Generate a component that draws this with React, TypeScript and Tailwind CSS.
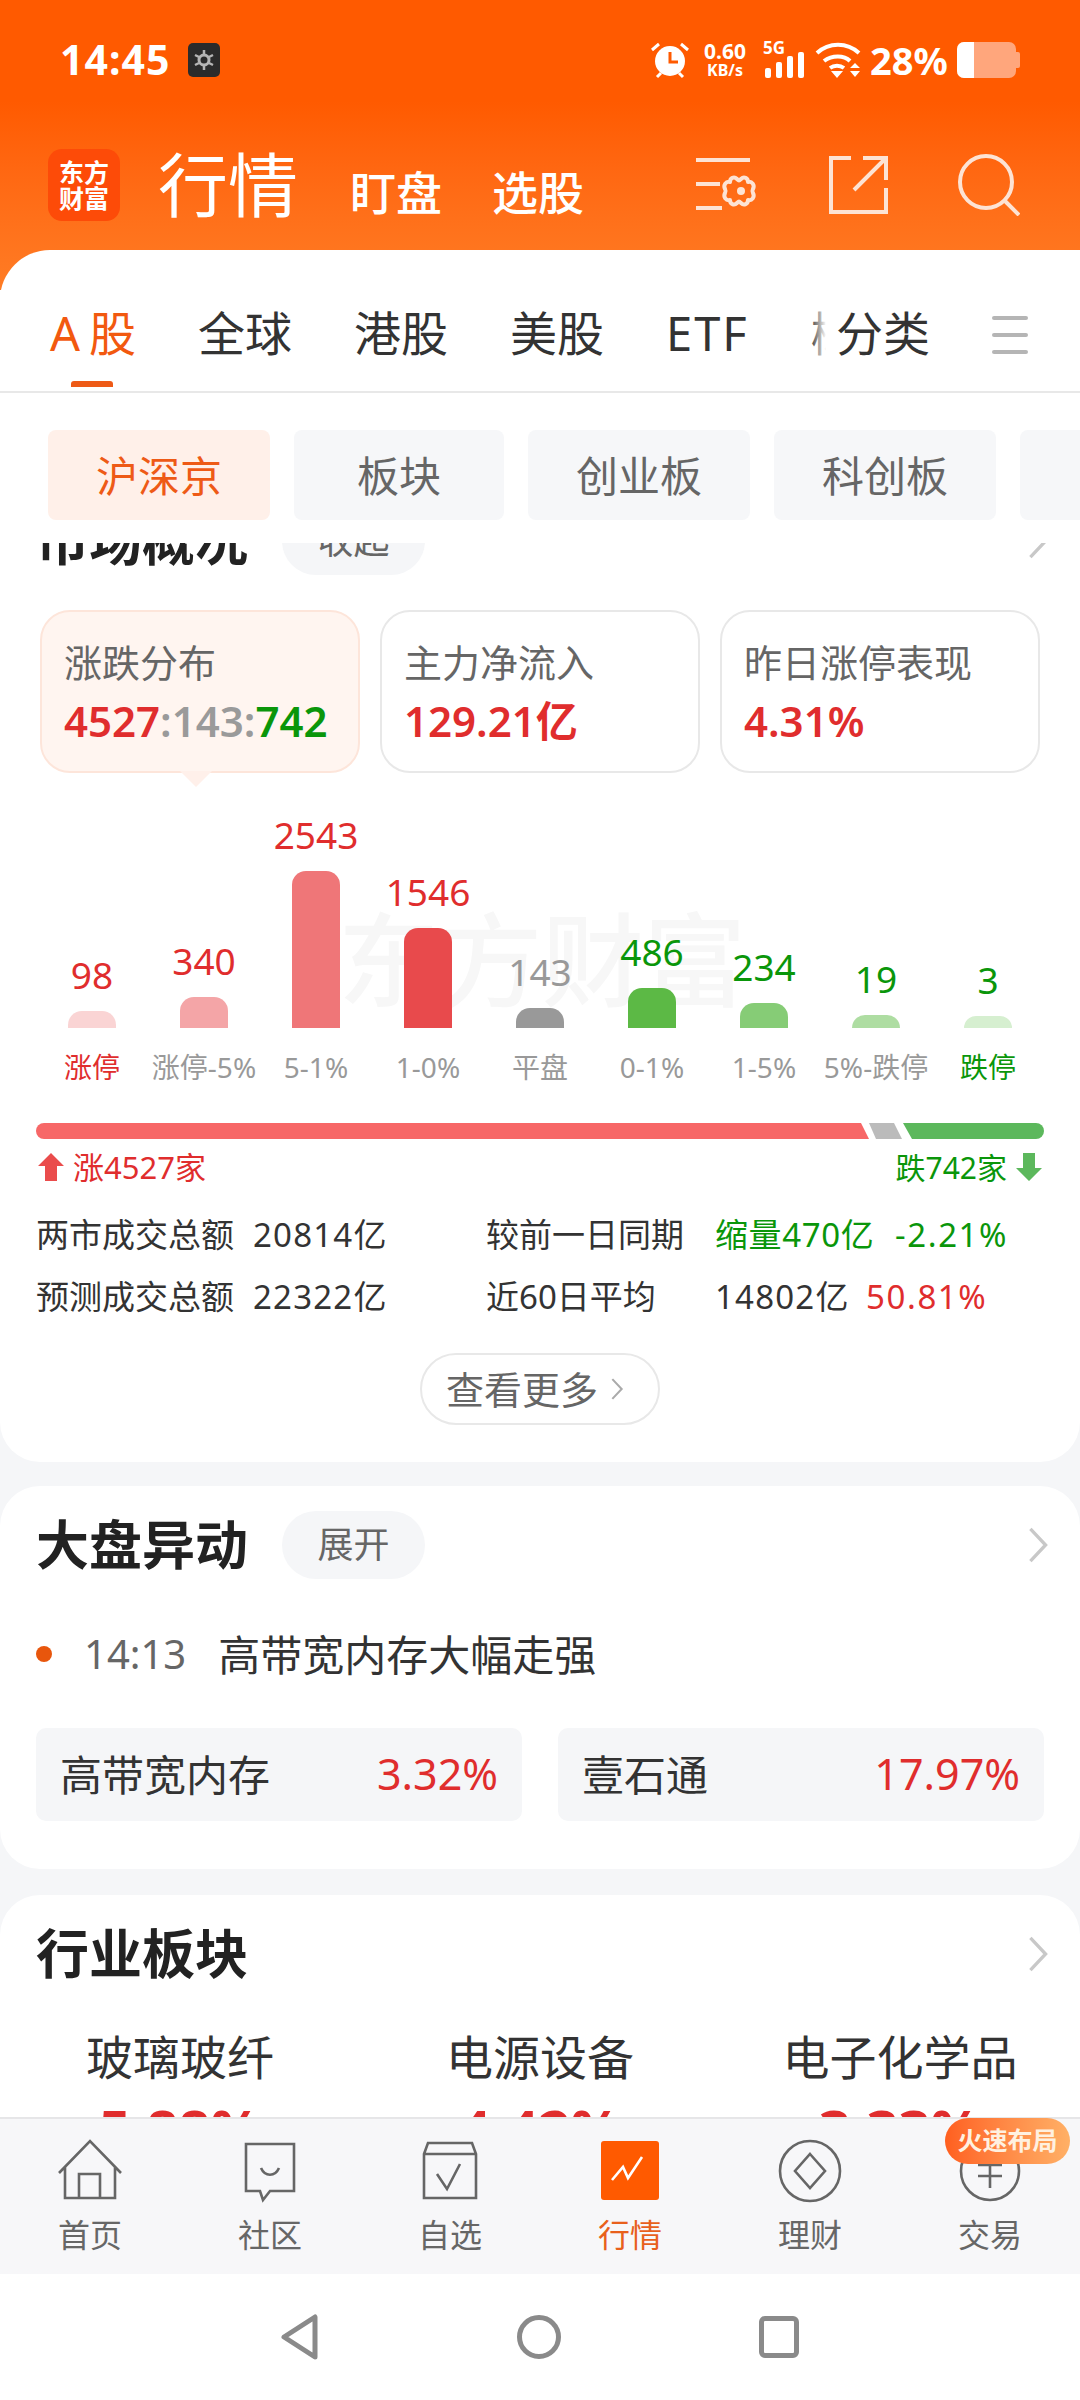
import React from 'react';

const tabs = ['全球', '港股', '美股', 'ETF', '概念'];
const chips = ['板块', '创业板', '科创板', '北证'];

const stats = [
  { title: '主力净流入', value: '129.21亿' },
  { title: '昨日涨停表现', value: '4.31%' },
];

const chart = [
  { n: '98', label: '涨停', h: 17, bar: 'bg-[#fad4d4]', num: 'text-[#e02d2d]', lab: 'text-[#e02d2d]' },
  { n: '340', label: '涨停-5%', h: 31, bar: 'bg-[#f4a5a7]', num: 'text-[#e02d2d]', lab: 'text-[#999999]' },
  { n: '2543', label: '5-1%', h: 157, bar: 'bg-[#ef7678]', num: 'text-[#e02d2d]', lab: 'text-[#999999]' },
  { n: '1546', label: '1-0%', h: 100, bar: 'bg-[#e84a4c]', num: 'text-[#e02d2d]', lab: 'text-[#999999]' },
  { n: '143', label: '平盘', h: 20, bar: 'bg-[#999999]', num: 'text-[#999999]', lab: 'text-[#999999]' },
  { n: '486', label: '0-1%', h: 40, bar: 'bg-[#5cb945]', num: 'text-[#0a960a]', lab: 'text-[#999999]' },
  { n: '234', label: '1-5%', h: 25, bar: 'bg-[#86cc76]', num: 'text-[#0a960a]', lab: 'text-[#999999]' },
  { n: '19', label: '5%-跌停', h: 13, bar: 'bg-[#aedda2]', num: 'text-[#0a960a]', lab: 'text-[#999999]' },
  { n: '3', label: '跌停', h: 12, bar: 'bg-[#d6efd0]', num: 'text-[#0a960a]', lab: 'text-[#0a960a]' },
];

const sectors = [
  { name: '玻璃玻纤', pct: '5.88%' },
  { name: '电源设备', pct: '4.42%' },
  { name: '电子化学品', pct: '3.33%' },
];

const Chevron = ({ className }: { className: string }) => (
  <svg className={className} viewBox="0 0 24 40" fill="none" stroke="currentColor" strokeWidth="3.5">
    <path d="M4 3l16 17L4 37" />
  </svg>
);

const navItems = [
  {
    label: '首页',
    icon: (
      <svg className="w-[66px] h-[66px]" viewBox="0 0 66 66" fill="none" stroke="#666" strokeWidth="2.6">
        <path d="M2 35L33 3l31 32M8 29v31h50V29M22 60V36h21v24" />
      </svg>
    ),
  },
  {
    label: '社区',
    icon: (
      <svg className="w-[66px] h-[66px]" viewBox="0 0 66 66" fill="none" stroke="#666" strokeWidth="2.6">
        <path d="M9 6h48v47H33l-7 9-3-9H9zM24 30c4 9 14 9 18 0" />
      </svg>
    ),
  },
  {
    label: '自选',
    icon: (
      <svg className="w-[66px] h-[66px]" viewBox="0 0 66 66" fill="none" stroke="#666" strokeWidth="2.6">
        <path d="M7 16l4-11h44l4 11v44H7zM7 16h52M20 36l10 15 13-25" />
      </svg>
    ),
  },
  {
    label: '行情',
    icon: (
      <svg className="w-[66px] h-[66px]" viewBox="0 0 66 66" fill="none">
        <rect x="4" y="3" width="58" height="59" rx="3" fill="#ff5a00" />
        <path d="M15 42l11-13 5 11 14-21" stroke="#fff" strokeWidth="2.6" />
      </svg>
    ),
  },
  {
    label: '理财',
    icon: (
      <svg className="w-[66px] h-[66px]" viewBox="0 0 66 66" fill="none" stroke="#666" strokeWidth="2.6">
        <circle cx="33" cy="33" r="30" />
        <path d="M33 16l15 17-15 17-15-17z" />
      </svg>
    ),
  },
  {
    label: '交易',
    icon: (
      <svg className="w-[66px] h-[66px]" viewBox="0 0 66 66" fill="none" stroke="#666" strokeWidth="2.6">
        <circle cx="33" cy="33" r="29" />
        <path d="M21 27h24M21 38h24M33 22v28" />
      </svg>
    ),
  },
];

const App: React.FC = () => {
  return (
    <div className="relative h-[2400px] w-[1080px] overflow-hidden flex flex-col bg-white font-['Noto_Sans','Noto_Sans_CJK_SC',sans-serif]">
      <div className="h-[290px] shrink-0 bg-gradient-to-b from-[#ff5a00] from-[35%] to-[#ff7c24]">
        {/* status bar */}
        <div className="h-[120px] flex items-center pl-[60px] pr-[60px] text-white">
          <span className="text-[41px] font-bold tracking-[1px]">14:45</span>
          <div className="ml-[18px] w-[32px] h-[34px] rounded-[5px] bg-[#2b2b2b] flex items-center justify-center">
            <svg className="w-[22px] h-[22px]" viewBox="0 0 22 22" fill="none" stroke="#b5b5b5">
              <circle cx="11" cy="11" r="5" strokeWidth="3" />
              <path d="M11 1v4M11 17v4M2 6l4 2M16 14l4 2M2 16l4-2M16 8l4-2" strokeWidth="2.5" />
            </svg>
          </div>
          <div className="ml-auto flex items-center">
            <svg className="w-[40px] h-[38px]" viewBox="0 0 40 38" fill="none">
              <circle cx="20" cy="20" r="15" fill="#fff" />
              <path d="M20 11v10h8" stroke="#ff5a00" strokeWidth="3" />
              <path d="M2 9l7-6M38 9l-7-6M7 36l4-4M33 36l-4-4" stroke="#fff" strokeWidth="3" />
            </svg>
            <div className="ml-[10px] w-[50px] flex flex-col items-center font-bold">
              <span className="text-[21px] leading-[21px]">0.60</span>
              <span className="text-[16px] leading-[17px]">KB/s</span>
            </div>
            <div className="relative ml-[13px] w-[44px] h-[38px]">
              <svg className="absolute left-0 top-0 w-[42px] h-[38px]" viewBox="0 0 42 38" fill="#fff">
                <rect x="2" y="27" width="6" height="10" rx="2" />
                <rect x="13" y="21" width="6" height="16" rx="2" />
                <rect x="24" y="15" width="6" height="22" rx="2" />
                <rect x="35" y="11" width="6" height="26" rx="2" />
              </svg>
              <span className="absolute left-0 -top-[3px] text-[17px] leading-[20px] font-bold">5G</span>
            </div>
            <svg className="ml-[8px] w-[46px] h-[38px]" viewBox="0 0 46 38" fill="none" stroke="#fff" strokeWidth="4">
              <path d="M2 12c12-11 30-11 42 0M9 20c8-6 20-6 26 0M15 27c4-3 10-3 14 0" />
              <path d="M16 30h12l-6 7zM35 27l5-5 5 5zM35 30h10l-5 6z" fill="#fff" stroke="none" />
            </svg>
            <span className="ml-[9px] w-[78px] text-[38px] leading-[44px] font-bold">28%</span>
            <div className="ml-[9px] flex items-center">
              <div className="w-[59px] h-[36px] rounded-[7px] overflow-hidden flex bg-[#ffa67c]">
                <div className="w-[17px] bg-white" />
              </div>
              <div className="w-[4px] h-[16px] rounded-r-[2px] bg-[#ffa67c]" />
            </div>
          </div>
        </div>

        {/* title bar */}
        <div className="h-[130px] flex items-center pl-[48px] pr-[60px] text-white">
          <div className="w-[72px] h-[72px] rounded-[14px] bg-[#fd4b08] flex flex-col items-center justify-center text-[25px] leading-[26px] font-bold">
            <span>东方</span>
            <span>财富</span>
          </div>
          <span className="ml-[38px] text-[70px] leading-[80px]">行情</span>
          <span className="ml-[52px] mt-[14px] text-[46px] font-medium">盯盘</span>
          <span className="ml-[50px] mt-[14px] text-[46px] font-medium">选股</span>
          <div className="ml-auto flex items-center gap-[70px] text-[#fde3d4]">
            <svg className="w-[64px] h-[60px]" viewBox="0 0 64 60" fill="none" stroke="currentColor" strokeWidth="4">
              <path d="M1 5h54M1 29h24M1 53h26" />
              <path d="M47 24c3-3 7-1 7 3 4-1 7 3 5 7-1 2-1 2 0 4 2 4-1 8-5 7 0 4-4 6-7 3-2-2-2-2-4 0-3 3-7 1-7-3-4 1-7-3-5-7 1-2 1-2 0-4-2-4 1-8 5-7 0-4 4-6 7-3 2 2 2 2 4 0z" strokeLinejoin="round" transform="translate(-1 0)" />
              <circle cx="46" cy="36" r="4" fill="currentColor" stroke="none" />
            </svg>
            <svg className="w-[59px] h-[58px]" viewBox="0 0 59 58" fill="none" stroke="currentColor" strokeWidth="4">
              <path d="M22 2H2v54h55V32M25 34L57 2M34 2h23v22" />
            </svg>
            <svg className="w-[62px] h-[62px]" viewBox="0 0 62 62" fill="none" stroke="currentColor" strokeWidth="4">
              <circle cx="28" cy="28" r="26" />
              <path d="M47 47l14 14" />
            </svg>
          </div>
        </div>
      </div>

      {/* main card sits over the orange header */}
      <div className="-mt-[40px] h-[293px] shrink-0 rounded-t-[50px] bg-white">
        <div className="relative h-[143px] border-b-2 border-[#e8e8e8] flex pl-[50px] pt-[53px] gap-[62px] text-[47px] leading-[60px] text-[#333333] overflow-hidden">
          <div className="relative shrink-0 w-[86px] text-[#f2590f] flex justify-between">
            <span>A</span>
            <span>股</span>
            <div className="absolute left-[21px] top-[78px] w-[42px] h-[6px] rounded-t-[3px] bg-[#ee5a16]" />
          </div>
          {tabs.map((t) => (
            <span key={t} className={`shrink-0 ${t === 'ETF' ? 'tracking-[2px]' : ''}`}>{t}</span>
          ))}
          <div className="absolute right-0 top-0 bottom-0 w-[270px] pt-[53px] flex items-start bg-gradient-to-r from-transparent to-white to-[6%]">
            <span className="ml-[26px]">分类</span>
            <div className="ml-[62px] mt-[13px] w-[36px] flex flex-col gap-[13px]">
              <div className="h-[4px] bg-[#b5b5b5] rounded" />
              <div className="h-[4px] bg-[#b5b5b5] rounded" />
              <div className="h-[4px] bg-[#b5b5b5] rounded" />
            </div>
          </div>
        </div>
        <div className="mt-[37px] flex gap-[24px] pl-[48px] overflow-hidden text-[42px] text-[#666666]">
          <div className="shrink-0 w-[222px] h-[90px] rounded-[8px] bg-[#fff0e9] text-[#ee5a16] flex items-center justify-center">沪深京</div>
          {chips.map((c, i) => (
            <div key={c} className={`shrink-0 h-[90px] rounded-[8px] bg-[#f6f7f9] flex items-center justify-center ${i === 0 ? 'w-[210px]' : 'w-[222px]'}`}>
              {c}
            </div>
          ))}
        </div>
      </div>

      {/* scrolling content, cut off by the chips on top and the nav below */}
      <div className="h-[1574px] shrink-0 overflow-hidden bg-[#f5f6f8]">
        <div className="-mt-[36px] bg-white rounded-b-[40px] px-[36px] pb-[37px]">
          <div className="h-[68px] flex items-center">
            <span className="text-[53px] font-bold text-[#222222]">市场概况</span>
            <span className="ml-[34px] w-[143px] h-[68px] rounded-full bg-[#f5f6f8] flex items-center justify-center text-[36px] text-[#666666]">收起</span>
            <Chevron className="ml-auto -mr-[6px] w-[24px] h-[38px] text-[#c8c8c8]" />
          </div>

          <div className="mt-[35px] flex gap-[20px] pl-[4px]">
            <div className="relative w-[320px] h-[163px] rounded-[30px] border-2 border-[#fde5da] bg-[#fff5f0] pl-[22px] pt-[24px]">
              <div className="text-[38px] leading-[52px] text-[#666666]">涨跌分布</div>
              <div className="mt-[6px] text-[42px] leading-[54px] font-semibold text-[#9a9a9a]">
                <span className="text-[#e02d2d]">4527</span>:143:<span className="text-[#0a960a]">742</span>
              </div>
              <div className="absolute left-[138px] -bottom-[16px] w-[32px] h-[16px] bg-[#fff0ea] [clip-path:polygon(0_0,100%_0,50%_100%)]" />
            </div>
            {stats.map((s) => (
              <div key={s.title} className="w-[320px] h-[163px] rounded-[30px] border-2 border-[#e8e8e8] pl-[22px] pt-[24px]">
                <div className="text-[38px] leading-[52px] text-[#666666]">{s.title}</div>
                <div className="mt-[6px] text-[42px] leading-[54px] font-semibold text-[#e02d2d]">{s.value}</div>
              </div>
            ))}
          </div>

          <div className="relative mt-[17px] h-[297px] grid grid-cols-9">
            <div className="absolute left-[302px] top-[110px] text-[102px] leading-[120px] font-medium text-[#f7f7f7]">东方财富</div>
            {chart.map((c) => (
              <div key={c.label} className="relative flex flex-col items-center justify-end">
                <div className={`mb-[16px] text-[37px] leading-[40px] ${c.num}`}>{c.n}</div>
                <div className={`w-[48px] rounded-t-[14px] ${c.bar}`} style={{ height: c.h }} />
                <div className={`mt-[19px] h-[40px] text-[28px] leading-[40px] whitespace-nowrap ${c.lab}`}>{c.label}</div>
              </div>
            ))}
          </div>

          <div className="mt-[36px] h-[16px] flex rounded-full overflow-hidden">
            <div className="w-[833px] bg-[#f76767] [clip-path:polygon(0_0,calc(100%-8px)_0,100%_100%,0_100%)]" />
            <div className="w-[33px] bg-[#bbbbbb] [clip-path:polygon(0_0,calc(100%-8px)_0,100%_100%,7px_100%)]" />
            <div className="flex-1 bg-[#5cb85c] [clip-path:polygon(1px_0,100%_0,100%_100%,10px_100%)]" />
          </div>

          <div className="mt-[8px] h-[40px] flex items-center text-[31px]">
            <svg className="ml-[2px] w-[26px] h-[28px]" viewBox="0 0 26 28" fill="#ea4c4c">
              <path d="M13 0l13 13h-7v15H7V13H0z" />
            </svg>
            <span className="ml-[9px] text-[#e02d2d]">涨4527家</span>
            <span className="ml-auto text-[30px] text-[#0a960a]">跌742家</span>
            <svg className="ml-[9px] mr-[2px] w-[26px] h-[28px]" viewBox="0 0 26 28" fill="#5cb85c">
              <path d="M13 28L0 15h7V0h12v15h7z" />
            </svg>
          </div>

          <div className="mt-[28px] h-[40px] flex items-center text-[33px] leading-[40px] text-[#333333] whitespace-nowrap">
            <span className="w-[217px]">两市成交总额</span>
            <span className="w-[233px] tracking-[1.2px]">20814亿</span>
            <span className="w-[229px]">较前一日同期</span>
            <span className="w-[180px] text-[#0a960a] tracking-[0.6px]">缩量470亿</span>
            <span className="text-[#0a960a] tracking-[1.6px]">-2.21%</span>
          </div>
          <div className="mt-[22px] h-[40px] flex items-center text-[33px] leading-[40px] text-[#333333] whitespace-nowrap">
            <span className="w-[217px]">预测成交总额</span>
            <span className="w-[233px] tracking-[1.2px]">22322亿</span>
            <span className="w-[229px]">近60日平均</span>
            <span className="w-[151px] tracking-[1.2px]">14802亿</span>
            <span className="text-[#e02d2d] tracking-[1.6px]">50.81%</span>
          </div>

          <div className="mt-[36px] flex justify-center">
            <div className="w-[240px] h-[72px] rounded-full border-2 border-[#e8e8e8] flex items-center pl-[24px] text-[38px] text-[#666666]">
              查看更多
              <Chevron className="ml-[12px] w-[14px] h-[24px] text-[#aaaaaa]" />
            </div>
          </div>
        </div>

        <div className="mt-[24px] h-[383px] bg-white rounded-[40px] px-[36px] pt-[25px]">
          <div className="h-[68px] flex items-center">
            <span className="text-[53px] font-bold text-[#222222]">大盘异动</span>
            <span className="ml-[34px] w-[143px] h-[68px] rounded-full bg-[#f5f6f8] flex items-center justify-center text-[36px] text-[#666666]">展开</span>
            <Chevron className="ml-auto -mr-[6px] w-[24px] h-[38px] text-[#c8c8c8]" />
          </div>
          <div className="mt-[47px] h-[56px] flex items-center">
            <div className="w-[16px] h-[16px] rounded-full bg-[#e8560c]" />
            <span className="ml-[32px] text-[40px] text-[#666666]">14:13</span>
            <span className="ml-[32px] text-[42px] text-[#333333]">高带宽内存大幅走强</span>
          </div>
          <div className="mt-[46px] flex gap-[36px]">
            <div className="flex-1 h-[93px] rounded-[10px] bg-[#f5f6f8] px-[24px] flex items-center justify-between text-[42px]">
              <span className="text-[#333333]">高带宽内存</span>
              <span className="text-[43px] text-[#e02d2d]">3.32%</span>
            </div>
            <div className="flex-1 h-[93px] rounded-[10px] bg-[#f5f6f8] px-[24px] flex items-center justify-between text-[42px]">
              <span className="text-[#333333]">壹石通</span>
              <span className="text-[43px] text-[#e02d2d]">17.97%</span>
            </div>
          </div>
        </div>

        <div className="mt-[26px] bg-white rounded-t-[40px] px-[36px] pt-[25px] h-[300px]">
          <div className="h-[68px] flex items-center">
            <span className="text-[53px] font-bold text-[#222222]">行业板块</span>
            <Chevron className="ml-auto -mr-[6px] w-[24px] h-[38px] text-[#c8c8c8]" />
          </div>
          <div className="mt-[39px] grid grid-cols-3 -mx-[36px]">
            {sectors.map((s) => (
              <div key={s.name} className="flex flex-col items-center">
                <span className="text-[47px] leading-[60px] text-[#333333]">{s.name}</span>
                <span className="mt-[10px] text-[56px] leading-[64px] font-bold text-[#e02d2d]">{s.pct}</span>
              </div>
            ))}
          </div>
        </div>
      </div>

      {/* bottom nav */}
      <div className="relative h-[157px] shrink-0 border-t-2 border-[#e6e6e8] bg-[#f7f7f9] grid grid-cols-6">
        {navItems.map((n) => (
          <div key={n.label} className="flex flex-col items-center pt-[19px]">
            {n.icon}
            <span className={`mt-[11px] text-[32px] leading-[40px] ${n.label === '行情' ? 'text-[#e8601c]' : 'text-[#666666]'}`}>{n.label}</span>
          </div>
        ))}
        <div className="absolute left-[945px] -top-[1px] w-[125px] h-[46px] rounded-full bg-gradient-to-r from-[#ff5f1f] to-[#ffb066] flex items-center justify-center text-[25px] font-bold text-[#fff1e0]">
          火速布局
        </div>
      </div>

      {/* android nav */}
      <div className="flex-1 flex items-center justify-center gap-[198px]">
        <svg className="w-[38px] h-[46px]" viewBox="0 0 38 46" fill="none" stroke="#8a8a8a" strokeWidth="5" strokeLinejoin="round">
          <path d="M34 3v40L3 23z" />
        </svg>
        <div className="w-[44px] h-[44px] rounded-full border-[5px] border-[#8a8a8a]" />
        <div className="w-[40px] h-[42px] rounded-[6px] border-[5px] border-[#8a8a8a]" />
      </div>
    </div>
  );
};

export default App;
